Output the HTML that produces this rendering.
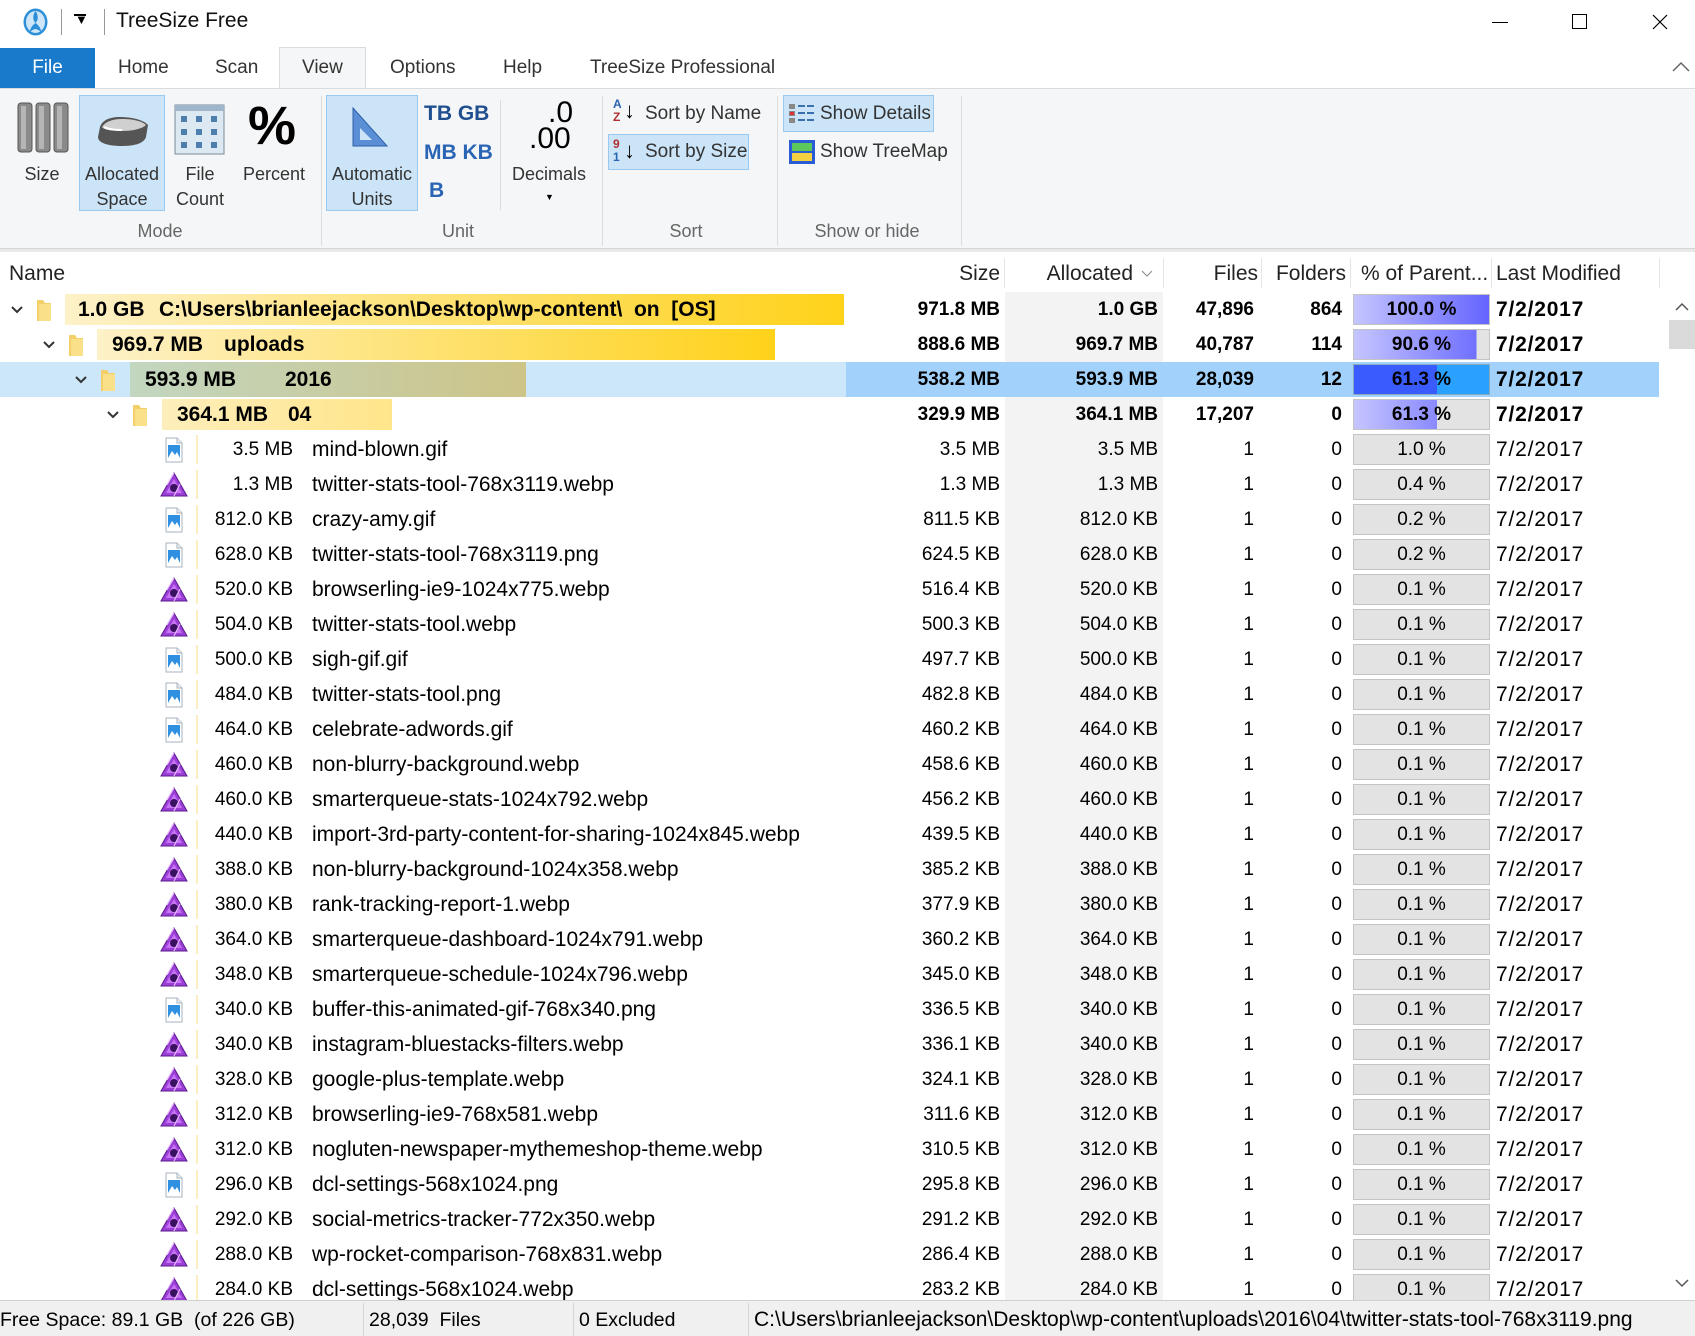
<!DOCTYPE html>
<html><head><meta charset="utf-8"><style>
*{margin:0;padding:0;box-sizing:border-box}
body{width:1695px;height:1336px;position:relative;overflow:hidden;background:#fff;font-family:"Liberation Sans",sans-serif;font-size:19px;color:#000}
.a{position:absolute;white-space:nowrap}
.lbl{position:absolute;text-align:center;color:#333;font-size:18px;line-height:25px}
.grp{position:absolute;top:221px;color:#666;font-size:18px;text-align:center}
.sep{position:absolute;top:96px;width:1px;height:150px;background:#dcdcdc}
.hl{position:absolute;background:#cce4f7;border:1px solid #99c9ef}
.r{position:absolute;left:0;width:1659px;height:35px;line-height:35px;transform:translateY(2px)}
.r span{position:absolute;white-space:nowrap}
.fs{left:200px;width:93px;text-align:right}
.fn{left:312px;font-size:21px}
.c1{left:850px;width:150px;text-align:right}
.c2{left:1005px;width:153px;text-align:right}
.c3{left:1163px;width:91px;text-align:right}
.c4{left:1262px;width:80px;text-align:right}
.dt{left:1496px;font-size:21px;letter-spacing:0.8px}
.pb{left:1353px;top:2px;width:137px;height:31px;border:1px solid #c4c4c4;background:#e3e3e3;text-align:center;line-height:29px;overflow:hidden}
.ic{left:160px;top:5px;width:28px;height:26px}
.vl{left:196px;top:3px;width:2px;height:29px;background:#fbeec0}
.b{font-weight:bold}
.nm{font-size:21px}
.hd{position:absolute;top:257px;height:34px;line-height:34px;font-size:21px;color:#222}
.hs{position:absolute;top:258px;width:1px;height:30px;background:#e5e5e5}
</style></head><body>
<svg width="0" height="0" style="position:absolute">
<defs>
<symbol id="img" viewBox="0 0 28 26"><path d="M6 1h11l5 5v19H6z" fill="#fff" stroke="#a9b3bf"/><path d="M17 1v5h5" fill="#e8ecf0" stroke="#a9b3bf"/><rect x="8" y="8" width="12" height="13" fill="#2f8fe0"/><path d="M8 21l4-7 3 4 2-3 3 6z" fill="#fff"/></symbol>
<symbol id="aff" viewBox="0 0 28 26"><path d="M14 1L27 24H1z" fill="#9b3fd6" stroke="#5a1a8c"/><path d="M14 7L22 21H6z" fill="#c873f5"/><circle cx="14" cy="16" r="4" fill="#3a1060"/><path d="M14 1L7 13M20 12L14 24" stroke="#e6b8ff" stroke-width="1.2"/></symbol>
<symbol id="fld" viewBox="0 0 16 24"><path d="M1 2h6l2 3h6v18H1z" fill="#f2cf68"/><path d="M3 6h12v17H3z" fill="#fbe08a"/></symbol>
<symbol id="chev" viewBox="0 0 14 10"><path d="M2 2l5 5 5-5" fill="none" stroke="#333" stroke-width="2"/></symbol>
</defs></svg>

<!-- title bar -->
<svg class="a" style="left:22px;top:7px" width="27" height="30" viewBox="0 0 27 30"><ellipse cx="13.5" cy="15" rx="12" ry="13.5" fill="#2c8fd8"/><ellipse cx="13.5" cy="15" rx="9.5" ry="11" fill="#cfe6f8"/><path d="M13.5 4c-3 4-3 9 0 12-3 2-5 5-6 9 3-2 5-3 6-3s3 1 6 3c-1-4-3-7-6-9 3-3 3-8 0-12z" fill="#2c8fd8"/></svg>
<div class="a" style="left:61px;top:9px;width:1px;height:26px;background:#999"></div>
<div class="a" style="left:75px;top:12px;font-size:13px">&#9660;</div>
<div class="a" style="left:74px;top:14px;width:12px;height:1.5px;background:#000"></div>
<div class="a" style="left:104px;top:9px;width:1px;height:26px;background:#999"></div>
<div class="a" style="left:116px;top:9px;font-size:21px;color:#111">TreeSize Free</div>
<div class="a" style="left:1492px;top:22px;width:16px;height:1px;background:#000"></div>
<div class="a" style="left:1572px;top:14px;width:15px;height:15px;border:1px solid #000"></div>
<svg class="a" style="left:1652px;top:14px" width="16" height="16"><path d="M1 1l14 14M15 1L1 15" stroke="#000" stroke-width="1.2"/></svg>

<!-- tabs -->
<div class="a" style="left:0;top:48px;width:95px;height:40px;background:#1979ca;color:#fff;font-size:19px;line-height:40px;text-align:center">File</div>
<div class="a" style="left:279px;top:47px;width:87px;height:42px;background:#f5f6f7;border:1px solid #dadbdc;border-bottom:none"></div>
<div class="a" style="left:118px;top:57px;font-size:19px;color:#333">Home</div>
<div class="a" style="left:215px;top:57px;font-size:19px;color:#333">Scan</div>
<div class="a" style="left:302px;top:57px;font-size:19px;color:#333">View</div>
<div class="a" style="left:390px;top:57px;font-size:19px;color:#333">Options</div>
<div class="a" style="left:503px;top:57px;font-size:19px;color:#333">Help</div>
<div class="a" style="left:590px;top:57px;font-size:19px;color:#333">TreeSize Professional</div>
<svg class="a" style="left:1672px;top:61px" width="18" height="11"><path d="M1 10l8-8 8 8" fill="none" stroke="#666" stroke-width="1.5"/></svg>

<!-- ribbon body -->
<div class="a" style="left:0;top:88px;width:1695px;height:161px;background:#f5f6f7;border-top:1px solid #dadbdc;border-bottom:1px solid #d5d5d5"></div>
<div class="a" style="left:0;top:249px;width:1695px;height:3px;background:#e9e9e9"></div>

<div class="hl" style="left:79px;top:95px;width:86px;height:116px"></div>
<div class="hl" style="left:326px;top:95px;width:92px;height:116px"></div>
<div class="hl" style="left:608px;top:134px;width:141px;height:36px"></div>
<div class="hl" style="left:783px;top:95px;width:151px;height:37px"></div>

<svg class="a" style="left:17px;top:102px" width="53" height="51"><g fill="#8a8a8a" stroke="#555"><rect x="1" y="1" width="14" height="49" rx="3"/><rect x="19" y="1" width="14" height="49" rx="3"/><rect x="37" y="1" width="14" height="49" rx="3"/></g><g fill="#b5b5b5"><rect x="4" y="4" width="5" height="43"/><rect x="22" y="4" width="5" height="43"/><rect x="40" y="4" width="5" height="43"/></g></svg>
<div class="lbl" style="left:17px;top:162px;width:50px">Size</div>
<svg class="a" style="left:94px;top:113px" width="56" height="34"><path d="M6 14c2-6 8-10 20-10s24 3 28 8l-2 12c-2 6-10 9-24 9S4 30 4 24z" fill="#555"/><path d="M8 14c3-5 10-8 20-8s20 2 24 6c-4 4-14 6-24 6S10 17 8 14z" fill="#d0d0d0"/><path d="M10 14c4 2 10 3 18 3" stroke="#fff" stroke-width="2" fill="none"/></svg>
<div class="lbl" style="left:79px;top:162px;width:86px">Allocated<br>Space</div>
<svg class="a" style="left:174px;top:104px" width="54" height="52"><rect x="1" y="1" width="49" height="49" fill="#dce8f2" stroke="#7a8a99"/><rect x="1" y="1" width="49" height="6" fill="#9fb6cc"/><g fill="#4d7fae"><rect x="7" y="12" width="6" height="6"/><rect x="22" y="12" width="6" height="6"/><rect x="37" y="12" width="6" height="6"/><rect x="7" y="25" width="6" height="6"/><rect x="22" y="25" width="6" height="6"/><rect x="37" y="25" width="6" height="6"/><rect x="7" y="38" width="6" height="6"/><rect x="22" y="38" width="6" height="6"/><rect x="37" y="38" width="6" height="6"/></g></svg>
<div class="lbl" style="left:172px;top:162px;width:56px">File<br>Count</div>
<div class="a" style="left:248px;top:96px;font-size:54px;font-weight:bold;line-height:60px">%</div>
<div class="lbl" style="left:236px;top:162px;width:76px">Percent</div>
<div class="grp" style="left:100px;width:120px">Mode</div>
<div class="sep" style="left:321px"></div>

<svg class="a" style="left:350px;top:106px" width="40" height="44"><path d="M3 2L37 40H3z" fill="#5a8fd6" stroke="#2d5fa8"/><path d="M10 22L22 34H10z" fill="#cce4f7"/></svg>
<div class="lbl" style="left:326px;top:162px;width:92px">Automatic<br>Units</div>
<div class="a b" style="left:424px;top:102px;font-size:21px;color:#1f4f8f">TB GB</div>
<div class="a b" style="left:424px;top:141px;font-size:21px;color:#2a64b5">MB KB</div>
<div class="a b" style="left:429px;top:179px;font-size:21px;color:#2a64b5">B</div>
<div class="sep" style="left:500px;top:100px;height:110px"></div>
<div class="a" style="left:548px;top:98px;font-size:30px;line-height:30px">.0</div>
<div class="a" style="left:529px;top:124px;font-size:30px;line-height:30px">.00</div>
<div class="lbl" style="left:509px;top:162px;width:80px">Decimals</div>
<div class="a" style="left:545px;top:192px;font-size:9px">&#9660;</div>
<div class="grp" style="left:418px;width:80px">Unit</div>
<div class="sep" style="left:602px"></div>

<div class="a b" style="left:613px;top:98px;font-size:12px;line-height:13px;color:#2a64b5">A<br><span style="color:#b03030">Z</span></div>
<div class="a" style="left:624px;top:98px;font-size:22px">&#8595;</div>
<div class="a" style="left:645px;top:103px;font-size:19px;color:#333">Sort by Name</div>
<div class="a b" style="left:613px;top:138px;font-size:12px;line-height:13px;color:#b03030">9<br><span style="color:#2a64b5">1</span></div>
<div class="a" style="left:624px;top:138px;font-size:22px">&#8595;</div>
<div class="a" style="left:645px;top:141px;font-size:19px;color:#333">Sort by Size</div>
<div class="grp" style="left:646px;width:80px">Sort</div>
<div class="sep" style="left:777px"></div>

<svg class="a" style="left:788px;top:103px" width="28" height="22"><g fill="#888"><rect x="1" y="1" width="6" height="5"/><rect x="1" y="8" width="6" height="5"/><rect x="1" y="15" width="6" height="5"/></g><g fill="#3a6fb0"><rect x="10" y="2" width="7" height="2"/><rect x="19" y="2" width="7" height="2"/><rect x="10" y="9" width="7" height="2"/><rect x="19" y="9" width="7" height="2"/><rect x="10" y="16" width="7" height="2"/><rect x="19" y="16" width="7" height="2"/></g><rect x="2" y="9" width="4" height="3" fill="#d33"/></svg>
<div class="a" style="left:820px;top:103px;font-size:19px;color:#333">Show Details</div>
<svg class="a" style="left:788px;top:139px" width="28" height="26"><rect x="1" y="1" width="26" height="24" fill="#2a5bd7"/><rect x="4" y="4" width="20" height="8" fill="#5cc85c"/><rect x="4" y="14" width="20" height="8" fill="#f5d040"/></svg>
<div class="a" style="left:820px;top:141px;font-size:19px;color:#333">Show TreeMap</div>
<div class="grp" style="left:797px;width:140px">Show or hide</div>
<div class="sep" style="left:961px"></div>

<!-- header -->
<div class="hd" style="left:9px">Name</div>
<div class="hd" style="left:900px;width:100px;text-align:right">Size</div>
<div class="hd" style="left:1010px;width:123px;text-align:right">Allocated</div>
<svg class="a" style="left:1141px;top:269px" width="12" height="9"><path d="M1 2l5 5 5-5" fill="none" stroke="#888"/></svg>
<div class="hd" style="left:1170px;width:88px;text-align:right">Files</div>
<div class="hd" style="left:1262px;width:84px;text-align:right">Folders</div>
<div class="hd" style="left:1361px">% of Parent...</div>
<div class="hd" style="left:1496px">Last Modified</div>
<div class="hs" style="left:1004px"></div><div class="hs" style="left:1163px"></div><div class="hs" style="left:1261px"></div><div class="hs" style="left:1350px"></div><div class="hs" style="left:1491px"></div><div class="hs" style="left:1659px"></div>

<div class="a" style="left:1005px;top:292px;width:158px;height:1008px;background:#f3f3f3"></div>

<div class="a" style="left:1668px;top:290px;width:27px;height:1010px;background:#fff"></div>
<svg class="a" style="left:1675px;top:302px" width="14" height="9"><path d="M1 8l6-6 6 6" fill="none" stroke="#555" stroke-width="1.5"/></svg>
<div class="a" style="left:1669px;top:320px;width:26px;height:29px;background:#dadada"></div>
<svg class="a" style="left:1675px;top:1279px" width="14" height="9"><path d="M1 1l6 6 6-6" fill="none" stroke="#555" stroke-width="1.5"/></svg>

<!-- tree rows -->
<div class="r b" style="top:290px">
<svg class="a" style="left:10px;top:13px" width="14" height="10"><use href="#chev"/></svg>
<svg class="a" style="left:36px;top:6px" width="16" height="24"><use href="#fld"/></svg>
<span style="left:65px;top:2px;width:779px;height:31px;background:linear-gradient(90deg,#fdf1c8,#ffd21a)"></span>
<span class="nm" style="left:78px">1.0 GB</span><span class="nm" style="left:159px">C:\Users\brianleejackson\Desktop\wp-content\&nbsp; on&nbsp; [OS]</span>
<span class="c1">971.8 MB</span><span class="c2">1.0 GB</span><span class="c3">47,896</span><span class="c4">864</span>
<span class="pb" style="background:linear-gradient(90deg,#c5c5ff,#6464ff)">100.0 %</span><span class="dt">7/2/2017</span></div>

<div class="r b" style="top:325px">
<svg class="a" style="left:42px;top:13px" width="14" height="10"><use href="#chev"/></svg>
<svg class="a" style="left:68px;top:6px" width="16" height="24"><use href="#fld"/></svg>
<span style="left:97px;top:2px;width:678px;height:31px;background:linear-gradient(90deg,#fdf1c8,#ffd21a)"></span>
<span class="nm" style="left:112px">969.7 MB</span><span class="nm" style="left:224px">uploads</span>
<span class="c1">888.6 MB</span><span class="c2">969.7 MB</span><span class="c3">40,787</span><span class="c4">114</span>
<span class="pb" style="background:linear-gradient(90deg,#c5c5ff,#7070ff 90.6%,#e3e3e3 90.6%)">90.6 %</span><span class="dt">7/2/2017</span></div>

<div class="r b" style="top:360px;background:#cce6fa">
<span style="left:846px;top:0;width:813px;height:35px;background:#a2d2fb"></span>
<svg class="a" style="left:74px;top:13px" width="14" height="10"><use href="#chev"/></svg>
<svg class="a" style="left:100px;top:6px" width="16" height="24"><use href="#fld"/></svg>
<span style="left:130px;top:0;width:396px;height:35px;background:linear-gradient(90deg,#c2d6c0,#cdc488)"></span>
<span class="nm" style="left:145px">593.9 MB</span><span class="nm" style="left:285px">2016</span>
<span class="c1">538.2 MB</span><span class="c2">593.9 MB</span><span class="c3">28,039</span><span class="c4">12</span>
<span class="pb" style="background:linear-gradient(90deg,#3a5cff,#3a5cff 61.3%,#2aa0ff 61.3%);border-color:#8ab">61.3 %</span><span class="dt">7/2/2017</span></div>

<div class="r b" style="top:395px">
<svg class="a" style="left:106px;top:13px" width="14" height="10"><use href="#chev"/></svg>
<svg class="a" style="left:132px;top:6px" width="16" height="24"><use href="#fld"/></svg>
<span style="left:162px;top:2px;width:230px;height:31px;background:linear-gradient(90deg,#fdeebb,#ffe58a)"></span>
<span class="nm" style="left:177px">364.1 MB</span><span class="nm" style="left:288px">04</span>
<span class="c1">329.9 MB</span><span class="c2">364.1 MB</span><span class="c3">17,207</span><span class="c4">0</span>
<span class="pb" style="background:linear-gradient(90deg,#c5c5ff,#8a8aff 61.3%,#e3e3e3 61.3%)">61.3 %</span><span class="dt">7/2/2017</span></div>

<div class="r" style="top:430px"><svg class="a ic"><use href="#img"/></svg><span class="vl"></span><span class="fs">3.5 MB</span><span class="fn">mind-blown.gif</span><span class="c1">3.5 MB</span><span class="c2">3.5 MB</span><span class="c3">1</span><span class="c4">0</span><span class="pb">1.0 %</span><span class="dt">7/2/2017</span></div>
<div class="r" style="top:465px"><svg class="a ic"><use href="#aff"/></svg><span class="vl"></span><span class="fs">1.3 MB</span><span class="fn">twitter-stats-tool-768x3119.webp</span><span class="c1">1.3 MB</span><span class="c2">1.3 MB</span><span class="c3">1</span><span class="c4">0</span><span class="pb">0.4 %</span><span class="dt">7/2/2017</span></div>
<div class="r" style="top:500px"><svg class="a ic"><use href="#img"/></svg><span class="vl"></span><span class="fs">812.0 KB</span><span class="fn">crazy-amy.gif</span><span class="c1">811.5 KB</span><span class="c2">812.0 KB</span><span class="c3">1</span><span class="c4">0</span><span class="pb">0.2 %</span><span class="dt">7/2/2017</span></div>
<div class="r" style="top:535px"><svg class="a ic"><use href="#img"/></svg><span class="vl"></span><span class="fs">628.0 KB</span><span class="fn">twitter-stats-tool-768x3119.png</span><span class="c1">624.5 KB</span><span class="c2">628.0 KB</span><span class="c3">1</span><span class="c4">0</span><span class="pb">0.2 %</span><span class="dt">7/2/2017</span></div>
<div class="r" style="top:570px"><svg class="a ic"><use href="#aff"/></svg><span class="vl"></span><span class="fs">520.0 KB</span><span class="fn">browserling-ie9-1024x775.webp</span><span class="c1">516.4 KB</span><span class="c2">520.0 KB</span><span class="c3">1</span><span class="c4">0</span><span class="pb">0.1 %</span><span class="dt">7/2/2017</span></div>
<div class="r" style="top:605px"><svg class="a ic"><use href="#aff"/></svg><span class="vl"></span><span class="fs">504.0 KB</span><span class="fn">twitter-stats-tool.webp</span><span class="c1">500.3 KB</span><span class="c2">504.0 KB</span><span class="c3">1</span><span class="c4">0</span><span class="pb">0.1 %</span><span class="dt">7/2/2017</span></div>
<div class="r" style="top:640px"><svg class="a ic"><use href="#img"/></svg><span class="vl"></span><span class="fs">500.0 KB</span><span class="fn">sigh-gif.gif</span><span class="c1">497.7 KB</span><span class="c2">500.0 KB</span><span class="c3">1</span><span class="c4">0</span><span class="pb">0.1 %</span><span class="dt">7/2/2017</span></div>
<div class="r" style="top:675px"><svg class="a ic"><use href="#img"/></svg><span class="vl"></span><span class="fs">484.0 KB</span><span class="fn">twitter-stats-tool.png</span><span class="c1">482.8 KB</span><span class="c2">484.0 KB</span><span class="c3">1</span><span class="c4">0</span><span class="pb">0.1 %</span><span class="dt">7/2/2017</span></div>
<div class="r" style="top:710px"><svg class="a ic"><use href="#img"/></svg><span class="vl"></span><span class="fs">464.0 KB</span><span class="fn">celebrate-adwords.gif</span><span class="c1">460.2 KB</span><span class="c2">464.0 KB</span><span class="c3">1</span><span class="c4">0</span><span class="pb">0.1 %</span><span class="dt">7/2/2017</span></div>
<div class="r" style="top:745px"><svg class="a ic"><use href="#aff"/></svg><span class="vl"></span><span class="fs">460.0 KB</span><span class="fn">non-blurry-background.webp</span><span class="c1">458.6 KB</span><span class="c2">460.0 KB</span><span class="c3">1</span><span class="c4">0</span><span class="pb">0.1 %</span><span class="dt">7/2/2017</span></div>
<div class="r" style="top:780px"><svg class="a ic"><use href="#aff"/></svg><span class="vl"></span><span class="fs">460.0 KB</span><span class="fn">smarterqueue-stats-1024x792.webp</span><span class="c1">456.2 KB</span><span class="c2">460.0 KB</span><span class="c3">1</span><span class="c4">0</span><span class="pb">0.1 %</span><span class="dt">7/2/2017</span></div>
<div class="r" style="top:815px"><svg class="a ic"><use href="#aff"/></svg><span class="vl"></span><span class="fs">440.0 KB</span><span class="fn">import-3rd-party-content-for-sharing-1024x845.webp</span><span class="c1">439.5 KB</span><span class="c2">440.0 KB</span><span class="c3">1</span><span class="c4">0</span><span class="pb">0.1 %</span><span class="dt">7/2/2017</span></div>
<div class="r" style="top:850px"><svg class="a ic"><use href="#aff"/></svg><span class="vl"></span><span class="fs">388.0 KB</span><span class="fn">non-blurry-background-1024x358.webp</span><span class="c1">385.2 KB</span><span class="c2">388.0 KB</span><span class="c3">1</span><span class="c4">0</span><span class="pb">0.1 %</span><span class="dt">7/2/2017</span></div>
<div class="r" style="top:885px"><svg class="a ic"><use href="#aff"/></svg><span class="vl"></span><span class="fs">380.0 KB</span><span class="fn">rank-tracking-report-1.webp</span><span class="c1">377.9 KB</span><span class="c2">380.0 KB</span><span class="c3">1</span><span class="c4">0</span><span class="pb">0.1 %</span><span class="dt">7/2/2017</span></div>
<div class="r" style="top:920px"><svg class="a ic"><use href="#aff"/></svg><span class="vl"></span><span class="fs">364.0 KB</span><span class="fn">smarterqueue-dashboard-1024x791.webp</span><span class="c1">360.2 KB</span><span class="c2">364.0 KB</span><span class="c3">1</span><span class="c4">0</span><span class="pb">0.1 %</span><span class="dt">7/2/2017</span></div>
<div class="r" style="top:955px"><svg class="a ic"><use href="#aff"/></svg><span class="vl"></span><span class="fs">348.0 KB</span><span class="fn">smarterqueue-schedule-1024x796.webp</span><span class="c1">345.0 KB</span><span class="c2">348.0 KB</span><span class="c3">1</span><span class="c4">0</span><span class="pb">0.1 %</span><span class="dt">7/2/2017</span></div>
<div class="r" style="top:990px"><svg class="a ic"><use href="#img"/></svg><span class="vl"></span><span class="fs">340.0 KB</span><span class="fn">buffer-this-animated-gif-768x340.png</span><span class="c1">336.5 KB</span><span class="c2">340.0 KB</span><span class="c3">1</span><span class="c4">0</span><span class="pb">0.1 %</span><span class="dt">7/2/2017</span></div>
<div class="r" style="top:1025px"><svg class="a ic"><use href="#aff"/></svg><span class="vl"></span><span class="fs">340.0 KB</span><span class="fn">instagram-bluestacks-filters.webp</span><span class="c1">336.1 KB</span><span class="c2">340.0 KB</span><span class="c3">1</span><span class="c4">0</span><span class="pb">0.1 %</span><span class="dt">7/2/2017</span></div>
<div class="r" style="top:1060px"><svg class="a ic"><use href="#aff"/></svg><span class="vl"></span><span class="fs">328.0 KB</span><span class="fn">google-plus-template.webp</span><span class="c1">324.1 KB</span><span class="c2">328.0 KB</span><span class="c3">1</span><span class="c4">0</span><span class="pb">0.1 %</span><span class="dt">7/2/2017</span></div>
<div class="r" style="top:1095px"><svg class="a ic"><use href="#aff"/></svg><span class="vl"></span><span class="fs">312.0 KB</span><span class="fn">browserling-ie9-768x581.webp</span><span class="c1">311.6 KB</span><span class="c2">312.0 KB</span><span class="c3">1</span><span class="c4">0</span><span class="pb">0.1 %</span><span class="dt">7/2/2017</span></div>
<div class="r" style="top:1130px"><svg class="a ic"><use href="#aff"/></svg><span class="vl"></span><span class="fs">312.0 KB</span><span class="fn">nogluten-newspaper-mythemeshop-theme.webp</span><span class="c1">310.5 KB</span><span class="c2">312.0 KB</span><span class="c3">1</span><span class="c4">0</span><span class="pb">0.1 %</span><span class="dt">7/2/2017</span></div>
<div class="r" style="top:1165px"><svg class="a ic"><use href="#img"/></svg><span class="vl"></span><span class="fs">296.0 KB</span><span class="fn">dcl-settings-568x1024.png</span><span class="c1">295.8 KB</span><span class="c2">296.0 KB</span><span class="c3">1</span><span class="c4">0</span><span class="pb">0.1 %</span><span class="dt">7/2/2017</span></div>
<div class="r" style="top:1200px"><svg class="a ic"><use href="#aff"/></svg><span class="vl"></span><span class="fs">292.0 KB</span><span class="fn">social-metrics-tracker-772x350.webp</span><span class="c1">291.2 KB</span><span class="c2">292.0 KB</span><span class="c3">1</span><span class="c4">0</span><span class="pb">0.1 %</span><span class="dt">7/2/2017</span></div>
<div class="r" style="top:1235px"><svg class="a ic"><use href="#aff"/></svg><span class="vl"></span><span class="fs">288.0 KB</span><span class="fn">wp-rocket-comparison-768x831.webp</span><span class="c1">286.4 KB</span><span class="c2">288.0 KB</span><span class="c3">1</span><span class="c4">0</span><span class="pb">0.1 %</span><span class="dt">7/2/2017</span></div>
<div class="r" style="top:1270px"><svg class="a ic"><use href="#aff"/></svg><span class="vl"></span><span class="fs">284.0 KB</span><span class="fn">dcl-settings-568x1024.webp</span><span class="c1">283.2 KB</span><span class="c2">284.0 KB</span><span class="c3">1</span><span class="c4">0</span><span class="pb">0.1 %</span><span class="dt">7/2/2017</span></div>

<!-- status bar -->
<div class="a" style="left:0;top:1300px;width:1695px;height:36px;background:#f0f0f0;border-top:1px solid #d0d0d0"></div>
<div class="a" style="left:0;top:1309px;font-size:19.5px">Free Space: 89.1 GB&nbsp; (of 226 GB)</div>
<div class="a" style="left:363px;top:1303px;width:1px;height:33px;background:#d5d5d5"></div>
<div class="a" style="left:369px;top:1309px;font-size:19.5px">28,039&nbsp; Files</div>
<div class="a" style="left:573px;top:1303px;width:1px;height:33px;background:#d5d5d5"></div>
<div class="a" style="left:579px;top:1309px;font-size:19.5px">0 Excluded</div>
<div class="a" style="left:748px;top:1303px;width:1px;height:33px;background:#d5d5d5"></div>
<div class="a" style="left:754px;top:1308px;font-size:21px">C:\Users\brianleejackson\Desktop\wp-content\uploads\2016\04\twitter-stats-tool-768x3119.png</div>
</body></html>
